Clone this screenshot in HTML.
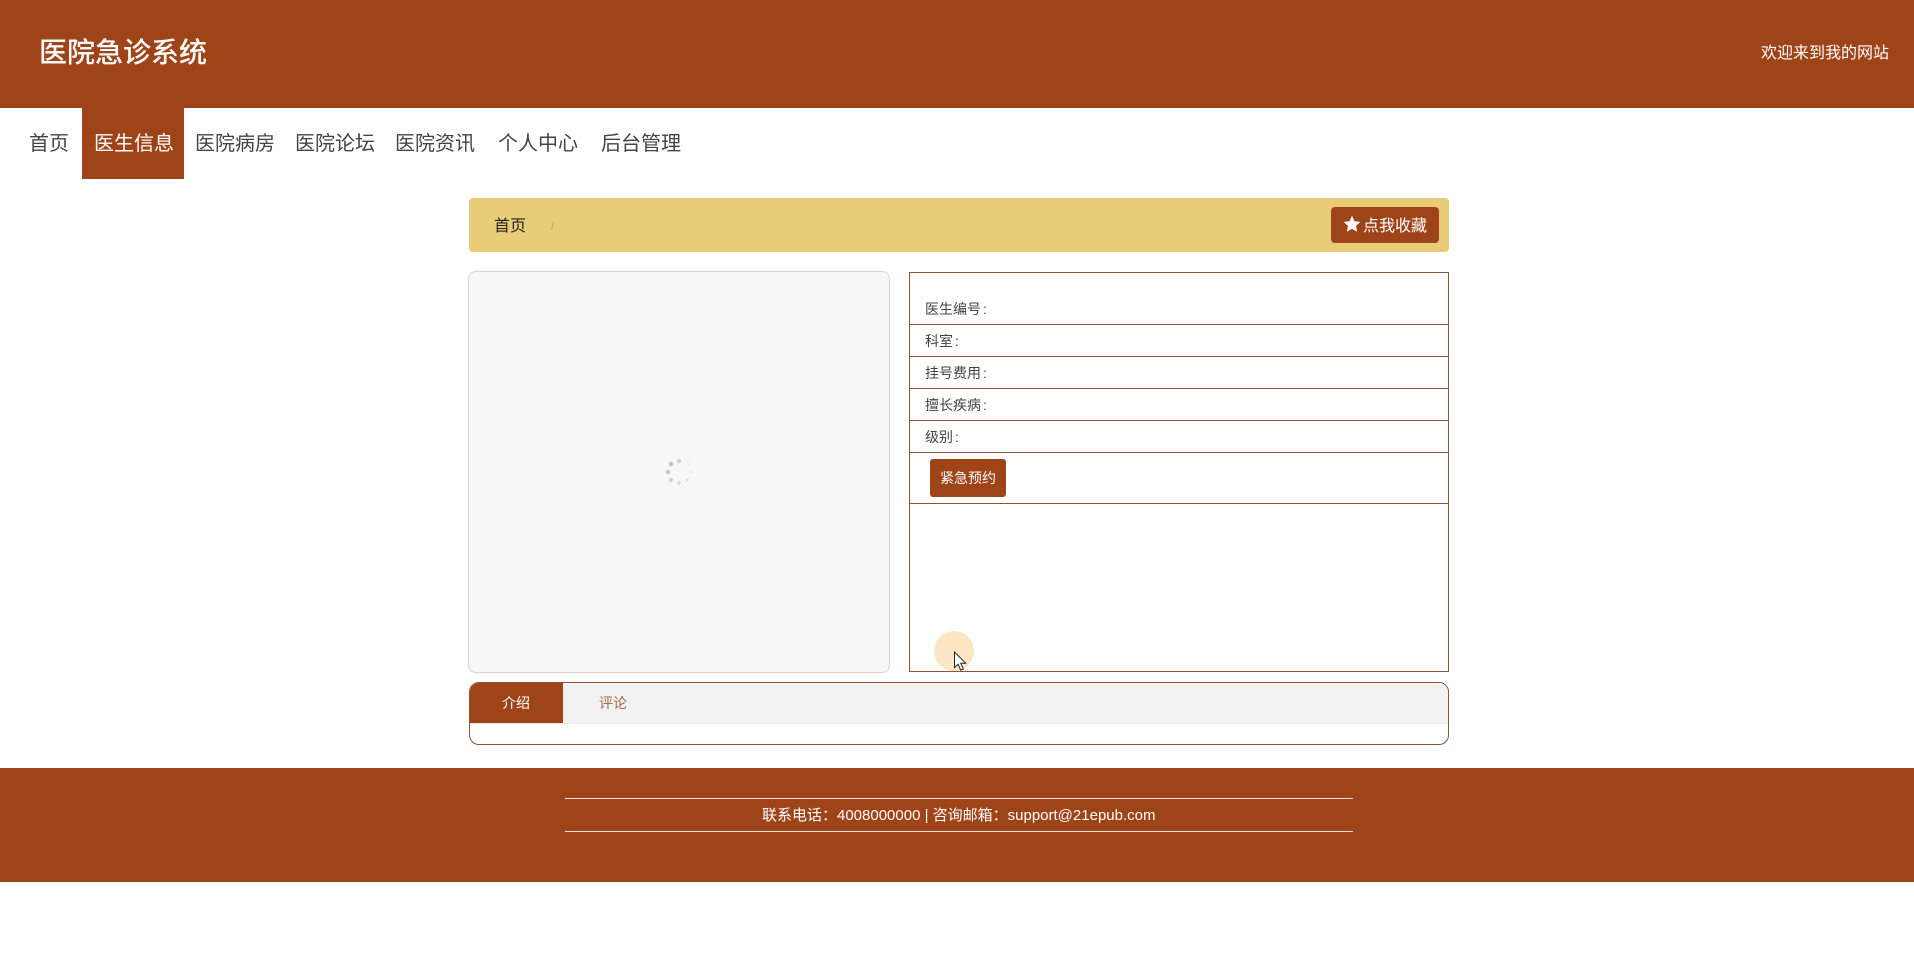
<!DOCTYPE html>
<html lang="zh-CN">
<head>
<meta charset="utf-8">
<title>医院急诊系统</title>
<style>
html,body{margin:0;padding:0;background:#fff;}
body{position:relative;width:1914px;height:964px;overflow:hidden;font-family:"Liberation Sans","Noto Sans CJK SC",sans-serif;color:#333;}
.a{position:absolute;white-space:nowrap;}
.t{position:absolute;white-space:nowrap;height:30px;line-height:30px;}
.c{position:absolute;background:#9f4319;}
.n{font-size:20px;color:#444;top:129px;}
.l{font-size:14px;color:#444;left:925px;}
.l i{font-style:normal;margin-left:2px;}
.h{position:absolute;left:910px;width:538px;height:1px;background:#8f5233;}
</style>
</head>
<body>
<div class="c" style="left:0;top:0;width:1914px;height:108px;"></div>
<div class="t" style="left:39px;top:38px;font-size:28px;color:#fff;font-weight:500;">医院急诊系统</div>
<div class="t" style="left:1761px;top:39px;font-size:16px;color:#fff;">欢迎来到我的网站</div>

<div class="c" style="left:82px;top:108px;width:102px;height:71px;"></div>
<div class="t n" style="left:29px;">首页</div>
<div class="t n" style="left:94px;color:#fff;">医生信息</div>
<div class="t n" style="left:195px;">医院病房</div>
<div class="t n" style="left:295px;">医院论坛</div>
<div class="t n" style="left:395px;">医院资讯</div>
<div class="t n" style="left:498px;">个人中心</div>
<div class="t n" style="left:601px;">后台管理</div>

<div class="a" style="left:469px;top:198px;width:980px;height:54px;background:#e8cc77;border-radius:4px;"></div>
<div class="t" style="left:494px;top:212px;font-size:16px;color:#222;">首页</div>
<div class="t" style="left:551px;top:211px;font-size:12px;color:#a8a08a;">/</div>
<div class="c" style="left:1331px;top:207px;width:108px;height:36px;border-radius:4px;"></div>
<svg class="a" style="left:1343px;top:215px;" width="18" height="18" viewBox="0 0 18 18"><path d="M9 .8l2.5 5.4 5.8.7-4.3 4 1.2 5.9L9 13.9l-5.2 2.9L5 10.9.7 6.9l5.8-.7z" fill="#fff"/></svg>
<div class="t" style="left:1363px;top:212px;font-size:16px;color:#fff;">点我收藏</div>

<div class="a" style="left:468px;top:271px;width:420px;height:400px;background:#f7f7f7;border:1px solid #e6cfc5;border-radius:8px;"></div>
<svg class="a" style="left:660px;top:455px;" width="36" height="36" viewBox="0 0 36 36">
<circle cx="19" cy="6" r="2.2" fill="#cfcfcf"/>
<circle cx="11" cy="9" r="2.4" fill="#c4c4c4"/>
<circle cx="8" cy="17" r="2.3" fill="#c8c8c8"/>
<circle cx="11" cy="25" r="2" fill="#d0d0d0"/>
<circle cx="19" cy="28" r="1.7" fill="#d6d6d6"/>
<circle cx="27" cy="25" r="1.3" fill="#dedede"/>
<circle cx="31" cy="17" r="1" fill="#e2e2e2"/>
<circle cx="29" cy="9" r=".8" fill="#e6e6e6"/>
</svg>

<div class="a" style="left:909px;top:272px;width:538px;height:398px;border:1px solid #8f5233;"></div>
<div class="h" style="top:324px;"></div>
<div class="h" style="top:356px;"></div>
<div class="h" style="top:388px;"></div>
<div class="h" style="top:420px;"></div>
<div class="h" style="top:452px;"></div>
<div class="h" style="top:503px;"></div>
<div class="t l" style="top:294px;">医生编号<i>:</i></div>
<div class="t l" style="top:326px;">科室<i>:</i></div>
<div class="t l" style="top:358px;">挂号费用<i>:</i></div>
<div class="t l" style="top:390px;">擅长疾病<i>:</i></div>
<div class="t l" style="top:422px;">级别<i>:</i></div>
<div class="c" style="left:930px;top:459px;width:76px;height:38px;border-radius:3px;"></div>
<div class="t" style="left:940px;top:463px;font-size:14px;color:#fff;">紧急预约</div>

<div class="a" style="left:934px;top:631px;width:40px;height:40px;border-radius:50%;background:#fce6c3;"></div>
<svg class="a" style="left:953px;top:651px;" width="15" height="21" viewBox="0 0 15 21"><path d="M1.5 1v15.5l3.6-3.3 2.6 6 2.6-1.1-2.6-5.9h4.9z" fill="#fff" stroke="#222" stroke-width="1"/></svg>

<div class="a" style="left:469px;top:682px;width:978px;height:61px;border:1px solid #8f5233;border-radius:10px;overflow:hidden;background:#fff;">
<div class="a" style="left:0;top:0;width:978px;height:40px;background:#f2f2f2;border-bottom:1px solid #e8e8e8;"></div>
<div class="c" style="left:0;top:0;width:93px;height:40px;"></div>
</div>
<div class="t" style="left:502px;top:688px;font-size:14px;color:#fff;">介绍</div>
<div class="t" style="left:599px;top:688px;font-size:14px;color:#a8674a;">评论</div>

<div class="c" style="left:0;top:768px;width:1914px;height:114px;"></div>
<div class="a" style="left:565px;top:798px;width:788px;height:1px;background:#f3e3da;"></div>
<div class="a" style="left:565px;top:831px;width:788px;height:1px;background:#f3e3da;"></div>
<div class="t" style="left:762px;top:801px;font-size:15px;color:#fff;">联系电话：4008000000 | 咨询邮箱：support@21epub.com</div>
</body>
</html>
